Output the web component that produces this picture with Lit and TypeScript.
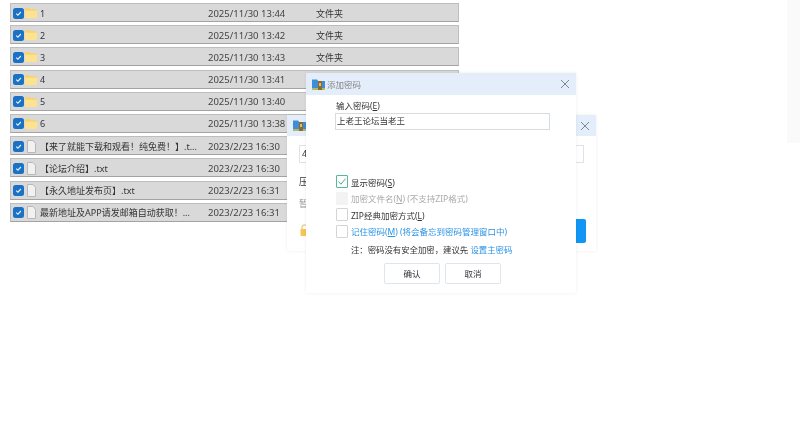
import { LitElement, html, css, svg } from "lit";
import { customElement } from "lit/decorators.js";

const rows = [
  { name: "1", date: "2025/11/30 13:44", type: "文件夹", folder: true },
  { name: "2", date: "2025/11/30 13:42", type: "文件夹", folder: true },
  { name: "3", date: "2025/11/30 13:43", type: "文件夹", folder: true },
  { name: "4", date: "2025/11/30 13:41", type: "文件夹", folder: true },
  { name: "5", date: "2025/11/30 13:40", type: "文件夹", folder: true },
  { name: "6", date: "2025/11/30 13:38", type: "文件夹", folder: true },
  { name: "【来了就能下载和观看！纯免费！】.t...", date: "2023/2/23 16:30", type: "", folder: false },
  { name: "【论坛介绍】.txt", date: "2023/2/23 16:30", type: "", folder: false },
  { name: "【永久地址发布页】.txt", date: "2023/2/23 16:31", type: "", folder: false },
  { name: "最新地址及APP请发邮箱自动获取！...", date: "2023/2/23 16:31", type: "", folder: false },
];

const folderIcon = svg`<svg width="12" height="10" viewBox="0 0 12 10"><path d="M0 1a1 1 0 0 1 1-1h3l1.5 1.2H11a1 1 0 0 1 1 1V9a1 1 0 0 1-1 1H1a1 1 0 0 1-1-1z" fill="#f9d367"/><path d="M0 2.8h12V9a1 1 0 0 1-1 1H1a1 1 0 0 1-1-1z" fill="#fde28f"/></svg>`;
const fileIcon = svg`<svg width="9" height="13" viewBox="0 0 9 13"><path d="M.5 .5h5.4L8.5 3.2V12.5H.5z" fill="#f1f1f1" stroke="#b8b8b8"/></svg>`;
const checkIcon = svg`<svg width="11" height="11" viewBox="0 0 11 11"><rect width="11" height="11" rx="2.5" fill="#1b72c4"/><path d="M3.2 5.6l1.7 1.6 3-3.2" fill="none" stroke="#e8f2fb" stroke-width="1.1"/></svg>`;
const closeIcon = svg`<svg width="10" height="10" viewBox="0 0 10 10"><path d="M1 1l8 8M9 1l-8 8" stroke="#7d8890" stroke-width="1" fill="none"/></svg>`;
const appIcon = svg`<svg width="13" height="13" viewBox="0 0 13 13"><path d="M0 1.5h5l1.2 1.5H13v9H0z" fill="#3d8ed6"/><rect y="10" width="13" height="2" fill="#b5b860"/><rect x="6" y="3" width="4" height="9" fill="#8a6a35"/><rect x="7" y="5" width="2" height="3" fill="#e9c04f"/></svg>`;
const tickIcon = svg`<svg width="10" height="9" viewBox="0 0 11 10"><path d="M1.5 5l2.8 3L9.5 1.8" fill="none" stroke="#46ad86" stroke-width="1.1"/></svg>`;
const lockIcon = svg`<svg width="9" height="12" viewBox="0 0 9 12"><path d="M2 5V3.2a2.5 2.5 0 0 1 4.8-.8" fill="none" stroke="#dcb85a" stroke-width="1"/><rect x="0.5" y="5" width="8" height="7" rx="1" fill="#f5c651"/></svg>`;

@customElement("app-root")
export class AppRoot extends LitElement {
  static styles = css`
    :host {
      display: block;
      position: relative;
      width: 800px;
      height: 421px;
      overflow: hidden;
      background: #fff;
      color: #333;
      font-family: "Noto Sans", "Noto Sans CJK SC", sans-serif;
      font-size: 9px;
      filter: blur(0.4px);
    }
    .list {
      display: grid;
      grid-auto-rows: 19px;
      row-gap: 3.2px;
      width: 449px;
      padding: 3px 0 0 10px;
    }
    .row {
      display: grid;
      grid-template-columns: 197px 108px 1fr;
      align-items: center;
      background: #d9d9d9;
      border: 1px solid #bdbdbd;
      border-bottom-color: #a3a3a3;
      box-sizing: border-box;
      padding-top: 1px;
      white-space: nowrap;
    }
    .name {
      display: flex;
      align-items: center;
      padding-left: 2px;
      overflow: hidden;
    }
    .name svg {
      flex: none;
      display: block;
    }
    .ic {
      flex: none;
      display: flex;
      width: 12px;
      margin: 0 3px 0 1px;
      justify-content: center;
    }
    .date {
      font-size: 9.5px;
      color: #444;
    }
    .side {
      position: absolute;
      right: 0;
      top: 0;
      width: 13px;
      height: 143px;
      background: #fafafa;
    }
    .dialog {
      position: absolute;
      background: #fff;
      box-shadow: 0 0 3px rgba(0, 0, 0, 0.08);
    }
    .back {
      left: 287px;
      top: 115px;
      width: 309px;
      height: 136px;
    }
    .front {
      left: 306px;
      top: 73px;
      width: 270px;
      height: 220px;
      font-size: 8.5px;
    }
    .title {
      display: flex;
      align-items: center;
      justify-content: space-between;
      background: #e3eefa;
      padding: 0 6px;
      color: #888;
    }
    .title > span {
      display: flex;
      align-items: center;
      gap: 2px;
    }
    .back .title { height: 21px; }
    .front .title { height: 22px; }
    .back-body {
      position: relative;
      height: 115px;
    }
    .pathbox {
      position: absolute;
      left: 12px;
      top: 9px;
      width: 285px;
      height: 18px;
      box-sizing: border-box;
      border: 1px solid #dfe3e8;
      padding-left: 2px;
      line-height: 16px;
      color: #333;
    }
    .pathtext { position: absolute; left: 12px; }
    .grey { color: #999; }
    .lock { position: absolute; left: 13px; top: 88px; }
    .blue {
      position: absolute;
      left: 289px;
      top: 83px;
      width: 10px;
      height: 24px;
      background: #1296f5;
      border-radius: 0 2px 2px 0;
    }
    .front-body {
      padding: 5px 0 0 29px;
    }
    .label {
      line-height: 12px;
      padding-left: 1px;
    }
    u { text-underline-offset: 1px; }
    .input {
      width: 215px;
      height: 17px;
      box-sizing: border-box;
      border: 1px solid #d6dde2;
      margin-top: 1px;
      line-height: 13px;
      padding-left: 1px;
      color: #333;
    }
    .opts {
      margin: 45px 0 0 1px;
      display: flex;
      flex-direction: column;
      gap: 3.5px;
    }
    .opt {
      display: flex;
      align-items: center;
      gap: 3px;
      height: 13px;
      white-space: nowrap;
    }
    .box {
      width: 10px;
      height: 11px;
      border: 1px solid #d4d4d4;
      border-radius: 1px;
      display: flex;
      align-items: center;
      justify-content: center;
      flex: none;
    }
    .box.on { border-color: #58b896; }
    .box.off { background: #f3f3f3; border-color: #f3f3f3; }
    .disabled { color: #aaa; }
    .link { color: #2a93e6; }
    .note {
      margin: 5px 0 0 16px;
      line-height: 13px;
      font-size: 8.4px;
      white-space: nowrap;
    }
    .btns {
      display: flex;
      gap: 5px;
      margin: 7px 0 0 49px;
    }
    .btn {
      width: 56px;
      height: 21px;
      box-sizing: border-box;
      border: 1px solid #dfe5ec;
      border-radius: 2px;
      display: flex;
      align-items: center;
      justify-content: center;
    }
  `;

  render() {
    return html`
      <div class="list">
        ${rows.map(
          (r) => html`<div class="row">
            <div class="name">
              ${checkIcon}
              <span class="ic">${r.folder ? folderIcon : fileIcon}</span>
              <span>${r.name}</span>
            </div>
            <div class="date">${r.date}</div>
            <div>${r.type}</div>
          </div>`
        )}
      </div>
      <div class="side"></div>

      <div class="dialog back">
        <div class="title"><span>${appIcon}</span>${closeIcon}</div>
        <div class="back-body">
          <div class="pathbox">4</div>
          <span class="pathtext" style="top:39px">压</span>
          <span class="pathtext grey" style="top:61px">暂</span>
          <span class="lock">${lockIcon}</span>
          <div class="blue"></div>
        </div>
      </div>

      <div class="dialog front">
        <div class="title"><span>${appIcon}<span>添加密码</span></span>${closeIcon}</div>
        <div class="front-body">
          <div class="label">输入密码(<u>E</u>)</div>
          <div class="input">上老王论坛当老王</div>
          <div class="opts">
            <div class="opt"><span class="box on">${tickIcon}</span><span>显示密码(<u>S</u>)</span></div>
            <div class="opt disabled"><span class="box off"></span><span>加密文件名(<u>N</u>) (不支持ZIP格式)</span></div>
            <div class="opt"><span class="box"></span><span>ZIP经典加密方式(<u>L</u>)</span></div>
            <div class="opt link"><span class="box"></span><span>记住密码(<u>M</u>) (将会备忘到密码管理窗口中)</span></div>
          </div>
          <div class="note">注：密码没有安全加密，建议先 <span class="link">设置主密码</span></div>
          <div class="btns">
            <div class="btn">确认</div>
            <div class="btn">取消</div>
          </div>
        </div>
      </div>
    `;
  }
}
